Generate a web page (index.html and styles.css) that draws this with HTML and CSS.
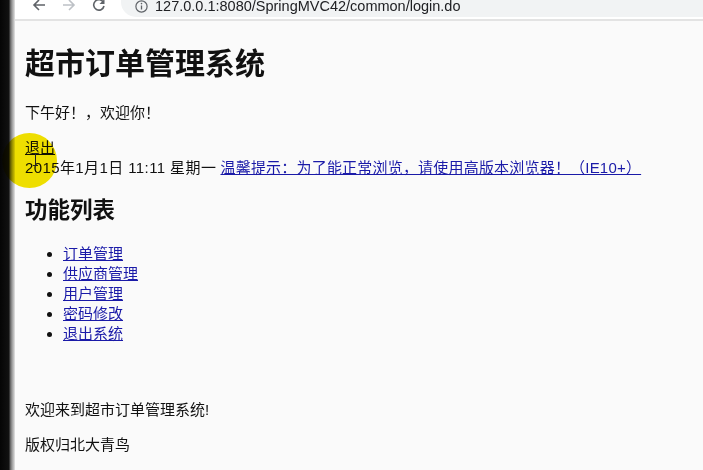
FILE: index.html
```html
<!DOCTYPE html>
<html lang="zh-CN">
<head>
    <meta charset="UTF-8">
    <title>超市订单管理系统</title>
    <link rel="stylesheet" href="styles.css">
</head>
<body>
    <div class="screen">
        <div class="edge"></div>
        <div class="window">
            <div class="chrome">
                <div class="nav">
                    <span class="nav-btn">
                        <svg width="14" height="14" viewBox="0 0 14 14"><path d="M13 7H2M7 2L2 7l5 5" fill="none" stroke="#5f6368" stroke-width="1.6"/></svg>
                    </span>
                    <span class="nav-btn">
                        <svg width="14" height="14" viewBox="0 0 14 14"><path d="M1 7h11M7 2l5 5-5 5" fill="none" stroke="#bdc1c6" stroke-width="1.6"/></svg>
                    </span>
                    <span class="nav-btn">
                        <svg width="14" height="14" viewBox="0 0 14 14"><path d="M11.5 4.5A5.2 5.2 0 1 0 12 8" fill="none" stroke="#5f6368" stroke-width="1.6"/><path d="M12.5 1v5h-5z" fill="#5f6368"/></svg>
                    </span>
                </div>
                <div class="omnibox">
                    <svg class="info" width="13" height="13" viewBox="0 0 13 13"><circle cx="6.5" cy="6.5" r="5.6" fill="none" stroke="#5f6368" stroke-width="1.2"/><path d="M6.5 5.5v4" stroke="#5f6368" stroke-width="1.3"/><circle cx="6.5" cy="3.6" r="0.8" fill="#5f6368"/></svg>
                    <span class="url">127.0.0.1:8080/SpringMVC42/common/login.do</span>
                </div>
            </div>

            <div class="page">
                <h1>超市订单管理系统</h1>
                <p>下午好！，欢迎你！</p>

                <div class="user-bar">
                    <a href="#" class="logout">退出</a><br>
                    <span class="date">2015年1月1日 11:11 星期一</span>
                    <a href="#" class="tip">温馨提示：为了能正常浏览，请使用高版本浏览器！（IE10+）</a>
                </div>

                <h2>功能列表</h2>
                <ul class="menu">
                    <li><a href="#">订单管理</a></li>
                    <li><a href="#">供应商管理</a></li>
                    <li><a href="#">用户管理</a></li>
                    <li><a href="#">密码修改</a></li>
                    <li><a href="#">退出系统</a></li>
                </ul>

                <div class="footer">
                    <p>欢迎来到超市订单管理系统!</p>
                    <p>版权归北大青鸟</p>
                </div>
            </div>
        </div>

        <div class="cursor-spot"></div>
        <svg class="ibeam" width="7" height="13" viewBox="0 0 7 13"><path d="M1 .5h5M1 12.5h5M3.5 .5v12" fill="none" stroke="#222" stroke-width="1"/></svg>
    </div>
</body>
</html>
```

FILE: styles.css
```css
* {
    box-sizing: border-box;
}

body {
    margin: 0;
    background: #fafafa;
    font-family: "Liberation Sans", "Noto Sans CJK SC", sans-serif;
    color: #111;
}

.screen {
    position: relative;
    display: flex;
    width: 703px;
    height: 470px;
    overflow: hidden;
}

.edge {
    width: 15px;
    flex-shrink: 0;
    background: linear-gradient(90deg, #050505 0, #111 9px, #5a5a5a 10px, #9a9a9a 12px, #c8c8c8 14px, #e8e8e8 15px);
}

.window {
    flex: 1;
    display: flex;
    flex-direction: column;
}

/* browser toolbar, cut off at the top of the capture */
.chrome {
    height: 21px;
    flex-shrink: 0;
    display: flex;
    align-items: flex-end;
    background: #fff;
    border-bottom: 2px solid #e3e3e3;
    padding-bottom: 2px;
    overflow: hidden;
}

.nav {
    display: flex;
    gap: 16px;
    padding-left: 17px;
    padding-bottom: 5px;
}

.nav-btn {
    width: 14px;
    height: 14px;
    display: flex;
}

.omnibox {
    flex: 1;
    height: 30px;
    margin-left: 15px;
    background: #f1f3f4;
    border-radius: 15px 0 0 15px;
    display: flex;
    align-items: center;
    padding: 8px 0 0 14px;
    gap: 7px;
}

.url {
    font-size: 14.5px;
    color: #202124;
}

.page {
    flex: 1;
    padding: 3px 10px 0;
    font-size: 15px;
    line-height: 20px;
}

.page h1 {
    font-size: 30px;
    margin: 20px 0;
    line-height: 39px;
}

.page h2 {
    font-size: 22.5px;
    margin: 18px 0;
    line-height: 30px;
}

.page p {
    margin: 15px 0;
}

.page a {
    color: #1a1aa8;
}

.user-bar .logout {
    color: #111;
}

.user-bar .date {
    letter-spacing: 0.4px;
}

.user-bar .tip {
    letter-spacing: 0.2px;
}

.menu {
    margin: 18px 0;
    padding-left: 38px;
}

.footer {
    margin-top: 56px;
}

.cursor-spot {
    position: absolute;
    left: 2px;
    top: 133px;
    width: 55px;
    height: 55px;
    border-radius: 50%;
    background: #f3e300;
    mix-blend-mode: multiply;
}

.ibeam {
    position: absolute;
    left: 32px;
    top: 153px;
}
```
